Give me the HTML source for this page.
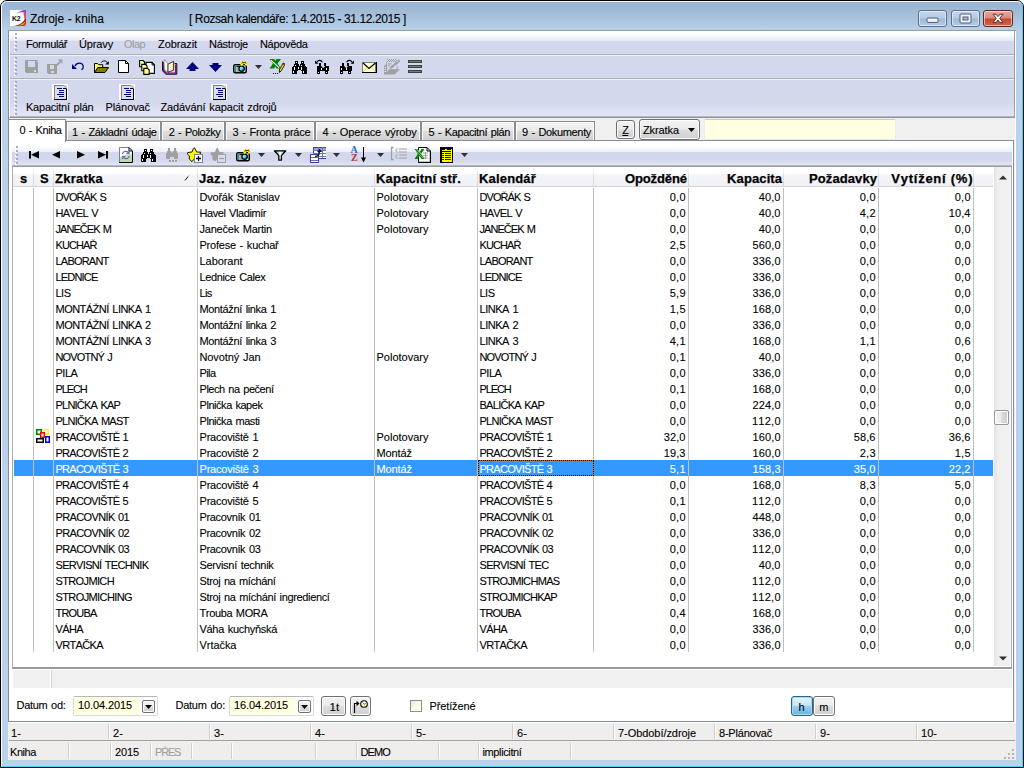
<!DOCTYPE html>
<html lang="cs"><head><meta charset="utf-8"><title>Zdroje - kniha</title>
<style>
html,body{margin:0;padding:0}
body{width:1024px;height:768px;overflow:hidden;background:#fff;position:relative;font-family:"Liberation Sans",sans-serif;font-size:11px;color:#000}
div,span,svg{position:absolute;box-sizing:border-box}
.t{white-space:pre;line-height:16px;height:16px;font-kerning:none;-webkit-text-stroke:0.1px currentColor}
.b{-webkit-text-stroke:0.25px currentColor}
.u{text-decoration:underline}
#frame{left:0;top:0;width:1024px;height:768px;border:1px solid #000;border-radius:7px 7px 0 0;background:#b9d1ea;overflow:hidden}
#cap{left:0;top:0;width:1022px;height:30px;background:linear-gradient(#98b3d1 0,#9fbad7 30%,#b9d1ea 100%)}
#hl{left:0;top:0;width:1022px;height:766px;border:1px solid;border-color:#f4f8fc #4fd0f4 #4fd0f4 #ffffff;border-radius:6px 6px 0 0}
#client{left:8px;top:30px;width:1008px;height:730px;background:#f0f0f0}
#cl1{left:8px;top:30px;width:1008px;height:1px;background:#9c9c9c}
#cl2{left:8px;top:31px;width:1px;height:691px;background:#8a8d96}
#cl3{left:1015px;top:31px;width:1px;height:691px;background:#fff}
#cl4{left:8px;top:722px;width:1008px;height:1px;background:#fff}
.cb{top:10px;height:17px;border:1px solid #5b6f8a;border-radius:3px;box-shadow:inset 0 0 0 1px rgba(255,255,255,.55)}
#dock{left:9px;top:31px;width:1006px;height:87px;background:#d4d8ed;border-left:1px solid #fff;border-right:1px solid #a0a0a0;border-bottom:1px solid #8f9098}
#dock .g0{left:0;top:0;width:1004px;height:10px;background:linear-gradient(#fff 0,#fff 28%,#e5e8f4 100%)}
#dock .gb{left:0;top:71px;width:1004px;height:15px;background:linear-gradient(#d4d8ed 0,#e1e5f4 93.3%,#b4b7c4 93.4%,#b4b7c4 100%)}
.sepd{left:0;width:1004px;height:1px;background:#b2b2b2}
.sepl{left:0;width:1004px;height:1px;background:#f0f1f8}
.grip{width:3px;background-image:linear-gradient(#a8acc2 0,#a8acc2 50%,transparent 50%),linear-gradient(#fff 0,#fff 50%,transparent 50%);background-size:2px 4px,2px 4px;background-position:1px 0,0 1px;background-repeat:repeat-y}
.tab{top:121px;height:19px;border:1px solid #898c95;border-bottom:none;background:linear-gradient(#f3f3f3 0,#ebebeb 50%,#dddddd 50%,#d0d0d0 100%);box-shadow:inset 1px 1px 0 #fcfcfc,inset -1px 0 0 #fcfcfc}
#tab0{left:8px;top:119px;width:58px;height:23px;border:1px solid #898c95;border-bottom:none;background:#fff}
#pagebox{left:8px;top:140px;width:1006px;height:582px;border:1px solid #898c95;background:#fff}
#gtb{left:12px;top:144px;width:1000px;height:22px;background:linear-gradient(#fff 0,#fff 8%,#edeff8 36.3%,#d3d7ec 36.4%,#d3d7ec 72%,#e2e5f3 95.4%,#b4b7c4 95.5%,#b4b7c4 100%)}
#grid{left:12px;top:166px;width:1000px;height:503px;border:1px solid;border-color:#9a9da6 #a4a8b2 #8e8e8e #a8abb3;border-bottom-width:2px;border-bottom-color:#9a9a9a;background:#fff}
#ghead{left:13px;top:167px;width:980px;height:20px;background:linear-gradient(#fff 0,#fff 35%,#f4f5f9 40%,#f0f1f6 100%);border-bottom:1px solid #d5d5d5}
.hs{top:167px;width:1px;height:20px;background:linear-gradient(#fff,#dfe0e4 40%,#d5d5d5)}
.vl{top:188px;width:1px;height:464px;background:#c0c0c0}
#sel{left:14px;top:460px;width:979px;height:16px;background:#3399ff}
#foc{left:478px;top:460px;width:116px;height:16px;border:1px solid #cc6600}
#foc2{left:478px;top:460px;width:116px;height:16px;border:1px dotted #000}
#sb{left:994px;top:167px;width:16px;height:499px;background:linear-gradient(90deg,#e3e3e3 0,#efefef 25%,#f0f0f0 100%)}
#thumb{left:994px;top:410px;width:15px;height:15px;border:1px solid #979797;border-radius:2px;background:linear-gradient(90deg,#f2f2f2 0,#ebebeb 48%,#d8d8d8 52%,#cfcfcf 100%);box-shadow:inset 0 0 0 1px #fff}
#band{left:13px;top:670px;width:999px;height:18px;background:#f0f0f0}
.inp{top:696px;height:20px;width:85px;border:1px solid #d5dae2;border-top-color:#b4b7bf;border-radius:2px;background:#fff}
.inp i{position:absolute;left:0;top:0;width:66px;height:18px;background:#ffffe1}
.ddb{top:699.5px;width:13px;height:13px;border:1px solid #707070;border-radius:2px;background:linear-gradient(#f2f2f2 0,#ebebeb 50%,#dddddd 50%,#cfcfcf 100%);box-shadow:inset 0 0 0 1px #fcfcfc}
.btn{top:696px;height:20px;border:1px solid #707070;border-radius:3px;background:linear-gradient(#f2f2f2 0,#ebebeb 48%,#dddddd 52%,#cfcfcf 100%);box-shadow:inset 0 0 0 1px #fcfcfc}
.btnp{top:696px;height:20px;border:1px solid #2c628b;border-radius:3px;background:linear-gradient(#e5f4fc 0,#c4e5f6 48%,#98d1ef 52%,#68b3db 100%);box-shadow:inset 0 0 0 1px #9edbf5}
#fbar{left:9px;top:723px;width:1006px;height:18px;background:#f0eded;border-bottom:1px solid #a0a0a0}
#sbar{left:9px;top:742px;width:1006px;height:18px;background:#f0eded}
.fs{top:724px;width:2px;height:15px;border-left:1px solid #d0cdcd;border-right:1px solid #fff}
.ss{top:743px;width:2px;height:16px;border-left:1px solid #d0cdcd;border-right:1px solid #fff}
</style></head>
<body>
<div id="frame"><div id="cap"></div><div id="hl"></div></div>
<span class="t " style="top:10.84px;font-size:12px;letter-spacing:0.045px;left:30.00px;">Zdroje - kniha</span>
<span class="t " style="top:10.84px;font-size:12px;letter-spacing:-0.399px;left:189.00px;">[ Rozsah kalendáře: 1.4.2015 - 31.12.2015 ]</span>
<div class="cb" style="left:918px;width:29px;background:linear-gradient(#c3d6ea 0,#b5cbe3 48%,#9db9d6 52%,#b3cde6 100%)"></div>
<div class="cb" style="left:951px;width:29px;background:linear-gradient(#c3d6ea 0,#b5cbe3 48%,#9db9d6 52%,#b3cde6 100%)"></div>
<div class="cb" style="left:983px;width:30px;border-color:#5a2a2a;background:linear-gradient(#e9a99c 0,#dc8a7b 48%,#c5442c 52%,#d3664e 100%)"></div>
<svg style="left:926px;top:17px" width="13" height="7" viewBox="0 0 13 7"><rect x="1" y="1" width="11" height="4.4" rx="1" fill="#f4f4f4" stroke="#4a5a78" stroke-width="1"/></svg>
<svg style="left:959px;top:13px" width="13" height="11" viewBox="0 0 13 11"><rect x="1" y="1" width="11" height="9" rx="1" fill="#f4f4f4" stroke="#4a5a78" stroke-width="1"/><rect x="4" y="4" width="5" height="3" fill="#a8c0dc" stroke="#4a5a78" stroke-width="1"/></svg>
<svg style="left:991px;top:12px" width="14" height="13" viewBox="0 0 14 13"><path d="M2 2.2H5L7 4.6L9 2.2H12L8.8 6.3L12 10.6H9L7 8.1L5 10.6H2L5.2 6.3z" fill="#f6f6f6" stroke="#5a3030" stroke-width="1" stroke-linejoin="round"/></svg>
<svg style="left:10px;top:10px" width="16" height="16" viewBox="0 0 16 16"><rect width="16" height="16" fill="#fff"/><path d="M6.5 3.4C9.5 0.8 13 0.1 16 0.2V3.4C13.2 1.8 10 2 6.5 3.4z" fill="#a838a8"/><path d="M10 1.2C12 0.4 14 0.2 16 0.2V1.6C14 1 12 1 10 1.2z" fill="#5a48b0"/><path d="M16 2.6V13.5C13.6 10.5 15 6.4 13.2 3.4z" fill="#e4485c"/><path d="M16 9V16H3C8.5 15.6 12.6 13.4 14.6 9.6z" fill="#b8201c"/><path d="M8 15.4C11.2 14.8 13.4 13.4 15 11.4C15 14 12.6 15.9 8 15.4z" fill="#f8c828"/><path d="M13 15.8C14.6 15 15.6 14 16 12.8V16z" fill="#f07820"/><text x="1.9" y="10.6" font-family="Liberation Sans,sans-serif" font-weight="bold" font-size="7" fill="#101010" textLength="8.8" lengthAdjust="spacingAndGlyphs">K2</text></svg>
<div id="client"></div><div id="cl1"></div><div id="cl2"></div><div id="cl3"></div><div id="cl4"></div>
<div id="dock"><div class="g0"></div><div class="gb"></div><div class="sepd" style="top:23px"></div><div class="sepl" style="top:24px"></div><div class="sepd" style="top:47px"></div><div class="sepl" style="top:48px"></div><div class="grip" style="left:4px;top:2px;height:19px"></div><div class="grip" style="left:4px;top:26px;height:19px"></div><div class="grip" style="left:4px;top:50px;height:35px"></div></div>
<span class="t " style="top:36.19px;font-size:11px;letter-spacing:-0.377px;left:26.00px;">Formulář</span>
<span class="t " style="top:36.19px;font-size:11px;letter-spacing:-0.141px;left:79.00px;">Úpravy</span>
<span class="t " style="top:36.19px;font-size:11px;letter-spacing:-0.562px;color:#a0a0a0;left:124.00px;">Olap</span>
<span class="t " style="top:36.19px;font-size:11px;letter-spacing:-0.094px;left:158.00px;">Zobrazit</span>
<span class="t " style="top:36.19px;font-size:11px;letter-spacing:-0.246px;left:209.00px;">Nástroje</span>
<span class="t " style="top:36.19px;font-size:11px;letter-spacing:-0.332px;left:260.00px;">Nápověda</span>
<span class="t " style="top:98.79px;font-size:11px;letter-spacing:-0.230px;word-spacing:1px;left:26.00px;">Kapacitní plán</span>
<span class="t " style="top:98.79px;font-size:11px;letter-spacing:-0.096px;left:105.50px;">Plánovač</span>
<span class="t " style="top:98.79px;font-size:11px;letter-spacing:-0.122px;word-spacing:1px;left:160.50px;">Zadávání kapacit zdrojů</span>
<svg style="left:24px;top:59px" width="16" height="16" viewBox="0 0 16 16" shape-rendering="crispEdges"><path fill="#a0a0a0" d="M1 1h13v13H2l-1-1z"/><rect x="4" y="2" width="7" height="6" fill="#d4d8ed"/><rect x="10" y="11" width="2" height="2" fill="#d4d8ed"/><rect x="13" y="2" width="1" height="1" fill="#d4d8ed"/></svg>
<svg style="left:47px;top:59px" width="16" height="16" viewBox="0 0 16 16" shape-rendering="crispEdges"><path fill="#a0a0a0" d="M0 5h10v10H1l-1-1z"/><rect x="3" y="6" width="4" height="4" fill="#d4d8ed"/><rect x="4" y="12" width="3" height="2" fill="#d4d8ed"/><path d="M9.5 6.5L13 3" stroke="#a0a0a0" stroke-width="1.8" shape-rendering="auto"/><path d="M10.8 0.4H15.4V5z" fill="#a0a0a0" shape-rendering="auto"/></svg>
<svg style="left:70px;top:59px" width="16" height="16" viewBox="0 0 16 16" shape-rendering="crispEdges"><g shape-rendering="auto"><path d="M5 7C6.5 3.5 12.5 3 13.2 7.2C13.5 9 12.6 10.2 11.5 10.8" stroke="#000080" stroke-width="1.25" fill="none"/><path d="M2 5V10H7z" fill="#000080"/></g></svg>
<svg style="left:93px;top:59px" width="16" height="16" viewBox="0 0 16 16" shape-rendering="crispEdges"><g shape-rendering="auto"><path d="M1.5 13.5V4.5h3l1 1.2h4.2V8.5" fill="#ffff66" stroke="#000"/><path d="M1.5 13.5L4.8 8.5H15.6L12 13.5z" fill="#808000" stroke="#000"/><path d="M8.2 3.6C9.6 1.4 13 1.2 14.4 3.8" stroke="#000" fill="none"/><path d="M15.8 2.2V5.6H12.2z" fill="#000"/></g></svg>
<svg style="left:116px;top:59px" width="16" height="16" viewBox="0 0 16 16" shape-rendering="crispEdges"><g shape-rendering="auto"><path d="M2.5 1.5H9.5L12.5 4.5V13.5H2.5z" fill="#fff" stroke="#000"/><path d="M9.5 1.5V4.5H12.5" fill="none" stroke="#000"/></g></svg>
<svg style="left:139px;top:59px" width="16" height="16" viewBox="0 0 16 16" shape-rendering="crispEdges"><g shape-rendering="auto"><path d="M7 3.4H13L15.4 5.8V14.4H7z" fill="#fff" stroke="#000" stroke-width="1.1"/><path d="M13 3.6V6H15.2" stroke="#000" stroke-width=".9" fill="none"/><path d="M0.6 1.5H4L5.6 3.1V7.8H0.6z" fill="#ffff8c" stroke="#000" stroke-width="1.1"/><path d="M2.8 5.4H6.4L8 7V11.7H2.8z" fill="#ffff8c" stroke="#000" stroke-width="1.1"/><path d="M4.8 9.4H8.6L10.2 11V15.4H4.8z" fill="#ffff8c" stroke="#000" stroke-width="1.1"/></g></svg>
<svg style="left:162px;top:59px" width="16" height="16" viewBox="0 0 16 16" shape-rendering="crispEdges"><g shape-rendering="auto"><path d="M0.6 2.4V11.8L3.8 15.2H14.8V4.6H12.6" stroke="#000" stroke-width="1" fill="none"/><path d="M1.6 3V11.3L4.2 14.1H13.7V5.4" stroke="#800080" stroke-width="1.3" fill="none"/><path d="M1.9 2.4L2.8 0.5L6 5.2V13.2L2.4 10.6z" fill="#fff" stroke="#707070" stroke-width=".7"/><path d="M6 5.2L11.6 2.4V11.2L6 13.2z" fill="#fff" stroke="#000" stroke-width=".8"/><g fill="#ffee00"><rect x="8" y="5.6" width="1.2" height="1.2"/><rect x="8" y="7.8" width="1.2" height="1.2"/><rect x="8" y="10" width="1.2" height="1.2"/><rect x="9.8" y="4.8" width="1.2" height="1.2"/><rect x="9.8" y="7" width="1.2" height="1.2"/><rect x="9.8" y="9.2" width="1.2" height="1.2"/></g></g></svg>
<svg style="left:185px;top:59px" width="16" height="16" viewBox="0 0 16 16" shape-rendering="crispEdges"><path shape-rendering="auto" d="M1 10L7.5 3L14 10H10.5V12H4.5V10z" fill="#000080"/></svg>
<svg style="left:208px;top:59px" width="16" height="16" viewBox="0 0 16 16" shape-rendering="crispEdges"><path shape-rendering="auto" d="M1 6L7.5 13L14 6H10.5V4H4.5V6z" fill="#000080"/></svg>
<svg style="left:231px;top:59px" width="16" height="16" viewBox="0 0 16 16" shape-rendering="crispEdges"><g shape-rendering="auto"><defs><linearGradient id="lg" x1="0" y1="0" x2="1" y2="1"><stop offset="0" stop-color="#fff"/><stop offset=".5" stop-color="#40e8f0"/><stop offset="1" stop-color="#0018c0"/></linearGradient></defs><rect x="2.75" y="5.75" width="12.5" height="8" rx="1.5" fill="#eceef6" stroke="#000" stroke-width="1.5"/><rect x="3.6" y="6.5" width="1.5" height="6.5" fill="#189898"/><rect x="5.1" y="7.5" width="3" height="5.5" fill="#b4acac"/><path d="M5.5 7.4H8.5" stroke="#000" stroke-width="1"/><ellipse cx="10.6" cy="9.8" rx="2.7" ry="2.6" fill="url(#lg)" stroke="#000" stroke-width="1.3"/><rect x="9.4" y="2" width="6.8" height="4.2" fill="#ffff00"/><path d="M9.6 6.2L10.6 7.2L11.6 6.2zM14 6.2L15 7.2L16 6.2z" fill="#ffff00"/><path d="M10.6 4.2L11.8 3L13 4.2L14.2 3L15.4 4.2M11.8 4.8L13 6L14.2 4.8" stroke="#000" stroke-width=".9" fill="none"/></g></svg>
<svg style="left:255px;top:65px" width="7" height="4" viewBox="0 0 7 4"><path d="M0 0h7L3.5 4z" fill="#303030"/></svg>
<svg style="left:269px;top:59px" width="16" height="16" viewBox="0 0 16 16" shape-rendering="crispEdges"><g shape-rendering="auto"><path d="M0.5 0H5.2L6.4 1.8L7.6 0H12L8.6 4.6L12 9.5H7.4L6.2 7.6L5 9.5H0.5L4 4.6z" fill="#008000"/><path d="M2 1.2L10 8.6" stroke="#fff" stroke-width="1.1"/><path d="M14.2 4L16 5.2L12 12L10.5 13.5L10.3 11z" fill="#ffff00" stroke="#000" stroke-width=".9"/><path d="M14.2 4L16 5.2L15.4 6.2L13.6 5z" fill="#c00000"/></g><rect x="4" y="14" width="1" height="1" fill="#000"/><rect x="6" y="14" width="1" height="1" fill="#000"/><rect x="8" y="14" width="1" height="1" fill="#000"/></svg>
<svg style="left:292px;top:59px" width="16" height="16" viewBox="0 0 16 16" shape-rendering="crispEdges"><g transform="translate(0 2)"><rect x="3" y="0" width="3" height="3" fill="#000"/><rect x="9" y="0" width="3" height="3" fill="#000"/><rect x="2" y="3" width="5" height="2" fill="#000"/><rect x="8" y="3" width="5" height="2" fill="#000"/><rect x="1" y="5" width="13" height="1" fill="#000"/><rect x="0" y="6" width="15" height="3" fill="#000"/><rect x="0" y="9" width="5" height="4" fill="#000"/><rect x="10" y="9" width="5" height="4" fill="#000"/><rect x="5" y="9" width="1" height="1" fill="#000"/><rect x="9" y="9" width="1" height="1" fill="#000"/><rect x="4" y="1" width="1" height="1" fill="#fff"/><rect x="10" y="1" width="1" height="1" fill="#fff"/><rect x="3" y="4" width="1" height="1" fill="#fff"/><rect x="9" y="4" width="1" height="1" fill="#fff"/><rect x="2" y="6" width="1" height="3" fill="#fff"/><rect x="9" y="6" width="1" height="3" fill="#fff"/><rect x="6" y="6" width="1" height="2" fill="#fff"/><rect x="1" y="10" width="1" height="2" fill="#fff"/><rect x="11" y="10" width="1" height="2" fill="#fff"/></g></svg>
<svg style="left:315px;top:59px" width="16" height="16" viewBox="0 0 16 16" shape-rendering="crispEdges"><rect x="4" y="4" width="2" height="3" fill="#000"/><rect x="9" y="4" width="2" height="3" fill="#000"/><rect x="2" y="7" width="12" height="5" fill="#000"/><rect x="2" y="12" width="3" height="3" fill="#000"/><rect x="10" y="12" width="3" height="3" fill="#000"/><path d="M6.2 7h4l-2 2.2z" fill="#d4d8ed" shape-rendering="auto"/><rect x="6" y="9" width="1" height="2" fill="#fff"/><rect x="11" y="9" width="1" height="2" fill="#fff"/><rect x="3" y="13" width="1" height="1" fill="#fff"/><rect x="11" y="13" width="1" height="1" fill="#fff"/><g shape-rendering="auto"><path d="M1.6 3.6C2.8 0.9 6 0.6 7.4 3.2" stroke="#000" fill="none" stroke-width="1.1"/><path d="M0 1.4V4.8H3.4z" fill="#000"/></g></svg>
<svg style="left:338px;top:59px" width="16" height="16" viewBox="0 0 16 16" shape-rendering="crispEdges"><rect x="4" y="4" width="2" height="3" fill="#000"/><rect x="9" y="4" width="2" height="3" fill="#000"/><rect x="2" y="7" width="12" height="5" fill="#000"/><rect x="2" y="12" width="3" height="3" fill="#000"/><rect x="10" y="12" width="3" height="3" fill="#000"/><path d="M6.2 7h4l-2 2.2z" fill="#d4d8ed" shape-rendering="auto"/><rect x="3" y="9" width="1" height="2" fill="#fff"/><rect x="8" y="9" width="1" height="2" fill="#fff"/><rect x="3" y="13" width="1" height="1" fill="#fff"/><rect x="11" y="13" width="1" height="1" fill="#fff"/><g shape-rendering="auto"><path d="M8.6 3.2C10 0.6 13.2 0.9 14.4 3.6" stroke="#000" fill="none" stroke-width="1.1"/><path d="M16 1.4V4.8H12.6z" fill="#000"/></g></svg>
<svg style="left:361px;top:59px" width="16" height="16" viewBox="0 0 16 16" shape-rendering="crispEdges"><g shape-rendering="auto"><rect x="1.5" y="3.5" width="13" height="10" fill="#ffffd0" stroke="#808080"/><path d="M1 13.5H15.5V3" stroke="#000" stroke-width="1.2" fill="none"/><path d="M2 4L8 9.5L14.5 4" stroke="#000" stroke-width="1.3" fill="none"/><path d="M2 13L6 8.5M14.5 13L10.5 8.5" stroke="#d8d860" stroke-width="1" fill="none"/></g></svg>
<svg style="left:384px;top:59px" width="16" height="16" viewBox="0 0 16 16" shape-rendering="crispEdges"><g shape-rendering="auto" fill="#a0a0a0"><path d="M2.6 3.2V12.5" stroke="#a0a0a0" stroke-width="1" fill="none"/><rect x="3" y="0" width="1" height="1"/><rect x="5" y="0" width="1" height="1"/><rect x="7" y="0" width="1" height="1"/><rect x="9" y="0" width="1" height="1"/><rect x="11" y="0" width="1" height="1"/><rect x="4" y="1" width="1" height="1"/><rect x="6" y="1" width="1" height="1"/><rect x="8" y="1" width="1" height="1"/><rect x="10" y="1" width="1" height="1"/><rect x="12" y="1" width="1" height="1"/><rect x="3" y="2" width="1" height="1"/><rect x="5" y="2" width="1" height="1"/><rect x="7" y="2" width="1" height="1"/><rect x="9" y="2" width="1" height="1"/><rect x="11" y="2" width="1" height="1"/><rect x="4" y="4.4" width="3.6" height="1"/><rect x="4" y="6.4" width="2" height="1"/><path d="M15 0.2L16 2.4L8 9.2L5.6 10L6.2 8z"/><rect x="10.4" y="6.6" width="1" height="1" fill="#d4d8ed"/><rect x="12.8" y="2" width="1" height="1" fill="#d4d8ed"/><path d="M0 7L2.2 5.2V14H0z"/><path d="M0 15.6V13.8L2.6 13.6L5.2 10.3H16L10.6 15.6z"/><rect x="12.6" y="7.4" width="1" height="3"/><rect x="0.6" y="8" width="1" height="1" fill="#fff"/><rect x="0.6" y="10" width="1" height="1" fill="#fff"/><rect x="0.6" y="12" width="1" height="1" fill="#fff"/></g></svg>
<svg style="left:407px;top:59px" width="16" height="16" viewBox="0 0 16 16" shape-rendering="crispEdges"><g><rect x="1" y="1" width="14" height="3" fill="#404040"/><rect x="1" y="6" width="14" height="3" fill="#404040"/><rect x="1" y="11" width="14" height="3" fill="#404040"/><rect x="2" y="2" width="12" height="1" fill="#787878"/><rect x="2" y="7" width="12" height="1" fill="#787878"/><rect x="2" y="12" width="12" height="1" fill="#787878"/></g></svg>
<svg style="left:52px;top:84px" width="16" height="16" viewBox="0 0 16 16" shape-rendering="crispEdges"><rect x="0" y="0" width="16" height="16" fill="#fff"/><rect x="2" y="1" width="13" height="15" fill="#dcdfe9"/><path d="M2.5 15.5V1.5H11.5" stroke="#808080" fill="none"/><path d="M2 15.5H14.5V4.5H11" stroke="#000" fill="none"/><path d="M11 1L15 4.5" stroke="#a0a0a0" fill="none" shape-rendering="auto"/><g fill="#000080"><rect x="5" y="4" width="5" height="1"/><rect x="7" y="6" width="5" height="1"/><rect x="7" y="8" width="5" height="1"/><rect x="5" y="10" width="7" height="1"/><rect x="7" y="12" width="5" height="1"/></g></svg>
<svg style="left:119px;top:84px" width="16" height="16" viewBox="0 0 16 16" shape-rendering="crispEdges"><rect x="0" y="0" width="16" height="16" fill="#fff"/><rect x="2" y="1" width="13" height="15" fill="#dcdfe9"/><path d="M2.5 15.5V1.5H11.5" stroke="#808080" fill="none"/><path d="M2 15.5H14.5V4.5H11" stroke="#000" fill="none"/><path d="M11 1L15 4.5" stroke="#a0a0a0" fill="none" shape-rendering="auto"/><g fill="#000080"><rect x="5" y="4" width="5" height="1"/><rect x="7" y="6" width="5" height="1"/><rect x="7" y="8" width="5" height="1"/><rect x="5" y="10" width="7" height="1"/><rect x="7" y="12" width="5" height="1"/></g></svg>
<svg style="left:211px;top:84px" width="16" height="16" viewBox="0 0 16 16" shape-rendering="crispEdges"><rect x="0" y="0" width="16" height="16" fill="#fff"/><rect x="2" y="1" width="13" height="15" fill="#dcdfe9"/><path d="M2.5 15.5V1.5H11.5" stroke="#808080" fill="none"/><path d="M2 15.5H14.5V4.5H11" stroke="#000" fill="none"/><path d="M11 1L15 4.5" stroke="#a0a0a0" fill="none" shape-rendering="auto"/><g fill="#000080"><rect x="5" y="4" width="5" height="1"/><rect x="7" y="6" width="5" height="1"/><rect x="7" y="8" width="5" height="1"/><rect x="5" y="10" width="7" height="1"/><rect x="7" y="12" width="5" height="1"/></g></svg>
<div id="pagebox"></div>
<div id="tab0"></div>
<div class="tab" style="left:66px;width:95px"></div>
<div class="tab" style="left:161px;width:64px"></div>
<div class="tab" style="left:225px;width:90px"></div>
<div class="tab" style="left:315px;width:106px"></div>
<div class="tab" style="left:421px;width:94px"></div>
<div class="tab" style="left:515px;width:80px"></div>
<span class="t " style="top:122.19px;font-size:11px;letter-spacing:-0.448px;word-spacing:1px;left:19.50px;">0 - Kniha</span>
<span class="t " style="top:124.19px;font-size:11px;letter-spacing:-0.365px;word-spacing:1px;left:72.00px;">1 - Základní údaje</span>
<span class="t " style="top:124.19px;font-size:11px;letter-spacing:-0.447px;word-spacing:1px;left:168.80px;">2 - Položky</span>
<span class="t " style="top:124.19px;font-size:11px;letter-spacing:-0.204px;word-spacing:1px;left:232.50px;">3 - Fronta práce</span>
<span class="t " style="top:124.19px;font-size:11px;letter-spacing:-0.141px;word-spacing:1px;left:322.50px;">4 - Operace výroby</span>
<span class="t " style="top:124.19px;font-size:11px;letter-spacing:-0.396px;word-spacing:1px;left:428.50px;">5 - Kapacitní plán</span>
<span class="t " style="top:124.19px;font-size:11px;letter-spacing:-0.349px;word-spacing:1px;left:522.00px;">9 - Dokumenty</span>
<div class="btn" style="left:616px;top:120px;width:19px;height:19px"></div>
<span class="t u" style="top:121.59px;font-size:11px;letter-spacing:-0.734px;left:622.30px;">Z</span>
<div class="btn" style="left:639px;top:119px;width:61px;height:21px"></div>
<span class="t " style="top:121.79px;font-size:11px;letter-spacing:-0.098px;left:643.00px;">Zkratka</span>
<svg style="left:688px;top:128px" width="7" height="4"><path d="M0 0h7L3.5 4z" fill="#000"/></svg>
<div style="left:704px;top:119px;width:192px;height:21px;background:#ffffe1;border:1px solid #e8ecf0;border-top-color:#c9ccd3;border-radius:2px"></div>
<div id="gtb"><div class="grip" style="left:3px;top:2px;height:20px"></div></div>
<svg style="left:27px;top:147px" width="16" height="16" viewBox="0 0 16 16" shape-rendering="crispEdges"><rect x="2" y="4" width="2" height="7.6" fill="#000" shape-rendering="auto"/><path d="M4 7.8L12 4V11.6z" fill="#000" shape-rendering="auto"/></svg>
<svg style="left:50px;top:147px" width="16" height="16" viewBox="0 0 16 16" shape-rendering="crispEdges"><path d="M2 7.8L10 4V11.6z" fill="#000" shape-rendering="auto"/></svg>
<svg style="left:73px;top:147px" width="16" height="16" viewBox="0 0 16 16" shape-rendering="crispEdges"><path d="M12 7.8L4 4V11.6z" fill="#000" shape-rendering="auto"/></svg>
<svg style="left:96px;top:147px" width="16" height="16" viewBox="0 0 16 16" shape-rendering="crispEdges"><rect x="10" y="4" width="2" height="7.6" fill="#000" shape-rendering="auto"/><path d="M10 7.8L2 4V11.6z" fill="#000" shape-rendering="auto"/></svg>
<svg style="left:119px;top:147px" width="16" height="16" viewBox="0 0 16 16" shape-rendering="crispEdges"><g shape-rendering="auto"><path d="M0.5 0.5H9.5L13 4V15H0.5z" fill="#fff"/><path d="M0.5 15L0.5 10L13 7V15z" fill="#b8dcb8"/><path d="M0.5 15.5V0.5H9.5" stroke="#808080" fill="none"/><path d="M0 15.5H13.5V4L10 0.5V4H13" stroke="#000" fill="none"/><path d="M3.5 7C3.8 4.5 7 3.5 9 5.2" stroke="#6c6ca4" stroke-width="1.2" fill="none"/><path d="M10.6 3.2V7.2H6.8z" fill="#6c6ca4"/><path d="M10.3 9C10 11.5 7 12.5 5 10.8" stroke="#6c6ca4" stroke-width="1.2" fill="none"/><path d="M3.2 12.8V8.8H7z" fill="#6c6ca4"/></g></svg>
<svg style="left:141px;top:147px" width="16" height="16" viewBox="0 0 16 16" shape-rendering="crispEdges"><g transform="translate(0 2)"><rect x="3" y="0" width="3" height="3" fill="#000"/><rect x="9" y="0" width="3" height="3" fill="#000"/><rect x="2" y="3" width="5" height="2" fill="#000"/><rect x="8" y="3" width="5" height="2" fill="#000"/><rect x="1" y="5" width="13" height="1" fill="#000"/><rect x="0" y="6" width="15" height="3" fill="#000"/><rect x="0" y="9" width="5" height="4" fill="#000"/><rect x="10" y="9" width="5" height="4" fill="#000"/><rect x="5" y="9" width="1" height="1" fill="#000"/><rect x="9" y="9" width="1" height="1" fill="#000"/><rect x="4" y="1" width="1" height="1" fill="#fff"/><rect x="10" y="1" width="1" height="1" fill="#fff"/><rect x="3" y="4" width="1" height="1" fill="#fff"/><rect x="9" y="4" width="1" height="1" fill="#fff"/><rect x="2" y="6" width="1" height="3" fill="#fff"/><rect x="9" y="6" width="1" height="3" fill="#fff"/><rect x="6" y="6" width="1" height="2" fill="#fff"/><rect x="1" y="10" width="1" height="2" fill="#fff"/><rect x="11" y="10" width="1" height="2" fill="#fff"/></g></svg>
<svg style="left:165px;top:147px" width="16" height="16" viewBox="0 0 16 16" shape-rendering="crispEdges"><rect x="3" y="1" width="2" height="3" fill="#a0a0a0"/><rect x="9" y="1" width="2" height="3" fill="#a0a0a0"/><rect x="2" y="4" width="10" height="2" fill="#a0a0a0"/><rect x="1" y="6" width="12" height="4" fill="#a0a0a0"/><rect x="1" y="10" width="4" height="2" fill="#a0a0a0"/><rect x="9" y="10" width="4" height="2" fill="#a0a0a0"/><path d="M5.5 4h3l-1.5 2z" fill="#d4d8ed" shape-rendering="auto"/><g fill="#a0a0a0"><rect x="4" y="13" width="2" height="2"/><rect x="7" y="13" width="2" height="2"/><rect x="10" y="13" width="2" height="2"/></g></svg>
<svg style="left:187px;top:147px" width="16" height="16" viewBox="0 0 16 16" shape-rendering="crispEdges"><g shape-rendering="auto"><path d="M7.5 0.8L9.6 5L13.8 5.2L13 7.2L10 9L7.5 11.5L5 14.6L2.2 12L2.5 9L0.3 7L0.7 5.6L5 5L6.3 1.6z" fill="#ffff00" stroke="#000" stroke-width=".9"/><rect x="7.5" y="7.5" width="8" height="8" fill="#fff" stroke="#808080"/><path d="M9 11.5h5M11.5 9v5" stroke="#000" stroke-width="1.3"/></g></svg>
<svg style="left:210px;top:147px" width="16" height="16" viewBox="0 0 16 16" shape-rendering="crispEdges"><g shape-rendering="auto"><path d="M7.5 0.8L9.6 5L13.8 5.2L13 7.2L10 9L7.5 11.5L5 14.6L2.2 12L2.5 9L0.3 7L0.7 5.6L5 5L6.3 1.6z" fill="#a0a0a0"/><rect x="7.5" y="7.5" width="8" height="8" fill="#d8dbec" stroke="#a0a0a0"/><path d="M9 11.5h5" stroke="#a0a0a0" stroke-width="1.3"/></g></svg>
<svg style="left:234px;top:147px" width="16" height="16" viewBox="0 0 16 16" shape-rendering="crispEdges"><g shape-rendering="auto"><defs><linearGradient id="lg" x1="0" y1="0" x2="1" y2="1"><stop offset="0" stop-color="#fff"/><stop offset=".5" stop-color="#40e8f0"/><stop offset="1" stop-color="#0018c0"/></linearGradient></defs><rect x="2.75" y="5.75" width="12.5" height="8" rx="1.5" fill="#eceef6" stroke="#000" stroke-width="1.5"/><rect x="3.6" y="6.5" width="1.5" height="6.5" fill="#189898"/><rect x="5.1" y="7.5" width="3" height="5.5" fill="#b4acac"/><path d="M5.5 7.4H8.5" stroke="#000" stroke-width="1"/><ellipse cx="10.6" cy="9.8" rx="2.7" ry="2.6" fill="url(#lg)" stroke="#000" stroke-width="1.3"/><rect x="9.4" y="2" width="6.8" height="4.2" fill="#ffff00"/><path d="M9.6 6.2L10.6 7.2L11.6 6.2zM14 6.2L15 7.2L16 6.2z" fill="#ffff00"/><path d="M10.6 4.2L11.8 3L13 4.2L14.2 3L15.4 4.2M11.8 4.8L13 6L14.2 4.8" stroke="#000" stroke-width=".9" fill="none"/></g></svg>
<svg style="left:257.5px;top:153px" width="7" height="4" viewBox="0 0 7 4"><path d="M0 0h7L3.5 4z" fill="#303030"/></svg>
<svg style="left:272px;top:147px" width="16" height="16" viewBox="0 0 16 16" shape-rendering="crispEdges"><g shape-rendering="auto"><defs><linearGradient id="fg" x1="0" x2="1"><stop offset="0" stop-color="#208080"/><stop offset=".5" stop-color="#fff"/><stop offset="1" stop-color="#40a0a0"/></linearGradient></defs><path d="M2.4 3.8H13.8L9.4 8.6V13.2H6.8V8.6z" fill="url(#fg)" stroke="#000" stroke-width="1.3" stroke-linejoin="round"/></g></svg>
<svg style="left:295px;top:153px" width="7" height="4" viewBox="0 0 7 4"><path d="M0 0h7L3.5 4z" fill="#303030"/></svg>
<svg style="left:310px;top:147px" width="16" height="16" viewBox="0 0 16 16" shape-rendering="crispEdges"><rect x="3" y="0" width="13" height="11" fill="#fff" stroke="#40409a"/><rect x="3.5" y="0.5" width="12" height="3" fill="#9aa4d0"/><path d="M3 3.5H16M3 6.5H16M3 9H16M8.5 0V11M12.5 0V11" stroke="#6a78b8" fill="none"/><rect x="0.5" y="7.5" width="8" height="8" fill="#fff" stroke="#40409a"/><path d="M1 10.5H8M1 13H8" stroke="#6a78b8"/><g shape-rendering="auto"><path d="M5 9.5C8 9.5 9.5 8 9.5 4.5" stroke="#101040" stroke-width="1.3" fill="none"/><path d="M7 5L9.6 1.8L12.2 5z" fill="#101040"/></g></svg>
<svg style="left:333px;top:153px" width="7" height="4" viewBox="0 0 7 4"><path d="M0 0h7L3.5 4z" fill="#303030"/></svg>
<span class="t" style="left:350.5px;top:144.5px;font-family:'Liberation Serif',serif;font-weight:bold;font-size:10px;line-height:10px;height:10px;color:#3a6ac8">A</span>
<span class="t" style="left:351px;top:152.5px;font-family:'Liberation Serif',serif;font-weight:bold;font-size:10px;line-height:10px;height:10px;color:#b83030">Z</span>
<svg style="left:358px;top:147px" width="16" height="16" viewBox="0 0 16 16" shape-rendering="crispEdges"><g shape-rendering="auto"><path d="M5.5 0V13" stroke="#000" stroke-width="1"/><path d="M3 10.5H8L5.5 15.5z" fill="#000"/></g></svg>
<svg style="left:376.5px;top:153px" width="7" height="4" viewBox="0 0 7 4"><path d="M0 0h7L3.5 4z" fill="#303030"/></svg>
<svg style="left:390px;top:146px" width="18" height="16" viewBox="0 0 18 16" shape-rendering="crispEdges"><g shape-rendering="auto" stroke="#a0a0a0" fill="none"><path d="M3.5 1.5H1.5V13.5H3.5" stroke-width="1.3"/><path d="M7.5 2.5C5.5 2.5 5.5 6.5 7.5 6.5M7.5 8.5C5.5 8.5 5.5 12.5 7.5 12.5" stroke-width="1"/><path d="M9 3H17M9 6H17M9 9H17M9 12H17" stroke-width="1"/></g></svg>
<svg style="left:413.5px;top:147px" width="17" height="16" viewBox="0 0 17 16" shape-rendering="crispEdges"><g shape-rendering="auto"><path d="M4.5 0.5H13L16.5 4V15.5H4.5z" fill="#fff" stroke="#000"/><path d="M13 0.5V4H16.5" stroke="#000" fill="none"/><path d="M5 15.5H16.5V4.5" stroke="#000" stroke-width="1.4" fill="none"/><path d="M9 6H14M9 8.5H14M9 11H14M11.5 5V12" stroke="#909090" stroke-width=".8"/><path d="M0.5 2L3.5 2L5.5 5L7.5 2H10.5L7.2 7L10.5 12H7.5L5.5 9L3.5 12H0.5L3.8 7z" fill="#108010"/><path d="M1 3L9 11M2 2L10 10M3 2L10 9" stroke="#b0e0b0" stroke-width=".5"/></g></svg>
<svg style="left:440px;top:147px" width="13" height="16" viewBox="0 0 13 16" shape-rendering="crispEdges"><rect x="0.75" y="0.75" width="11.5" height="14.5" fill="#ffff00" stroke="#000" stroke-width="1.5"/><g fill="#000"><rect x="2" y="2" width="3" height="1"/><rect x="7" y="2" width="4" height="1"/><rect x="2" y="4" width="9" height="1"/></g><g fill="#0000ff"><rect x="2" y="6" width="2" height="1"/><rect x="5" y="6" width="6" height="1"/><rect x="2" y="8" width="2" height="1"/><rect x="5" y="8" width="6" height="1"/><rect x="2" y="10" width="2" height="1"/><rect x="5" y="10" width="6" height="1"/><rect x="2" y="12" width="2" height="1"/><rect x="5" y="12" width="6" height="1"/></g></svg>
<svg style="left:461px;top:153px" width="7" height="4" viewBox="0 0 7 4"><path d="M0 0h7L3.5 4z" fill="#303030"/></svg>
<div id="grid"></div><div id="ghead"></div>
<div class="hs" style="left:33px"></div>
<div class="vl" style="left:33px"></div>
<div class="hs" style="left:53px"></div>
<div class="vl" style="left:53px"></div>
<div class="hs" style="left:197px"></div>
<div class="vl" style="left:197px"></div>
<div class="hs" style="left:374px"></div>
<div class="vl" style="left:374px"></div>
<div class="hs" style="left:477px"></div>
<div class="vl" style="left:477px"></div>
<div class="hs" style="left:593px"></div>
<div class="vl" style="left:593px"></div>
<div class="hs" style="left:688px"></div>
<div class="vl" style="left:688px"></div>
<div class="hs" style="left:783px"></div>
<div class="vl" style="left:783px"></div>
<div class="hs" style="left:878px"></div>
<div class="vl" style="left:878px"></div>
<div class="hs" style="left:973px"></div>
<div class="vl" style="left:973px"></div>
<div id="sel"></div>
<div style="left:33px;top:460px;width:1px;height:16px;background:#c0c0c0"></div>
<div style="left:53px;top:460px;width:1px;height:16px;background:#c0c0c0"></div>
<div style="left:197px;top:460px;width:1px;height:16px;background:#c0c0c0"></div>
<div style="left:374px;top:460px;width:1px;height:16px;background:#c0c0c0"></div>
<div style="left:477px;top:460px;width:1px;height:16px;background:#c0c0c0"></div>
<div style="left:593px;top:460px;width:1px;height:16px;background:#c0c0c0"></div>
<div style="left:688px;top:460px;width:1px;height:16px;background:#c0c0c0"></div>
<div style="left:783px;top:460px;width:1px;height:16px;background:#c0c0c0"></div>
<div style="left:878px;top:460px;width:1px;height:16px;background:#c0c0c0"></div>
<div style="left:973px;top:460px;width:1px;height:16px;background:#c0c0c0"></div>
<div id="foc"></div><div id="foc2"></div>
<span class="t b" style="top:170.50px;font-size:13px;letter-spacing:-0.234px;font-weight:bold;left:20.00px;">s</span>
<span class="t b" style="top:170.50px;font-size:13px;letter-spacing:-0.172px;font-weight:bold;left:40.00px;">S</span>
<span class="t b" style="top:170.50px;font-size:13px;letter-spacing:0.250px;font-weight:bold;left:55.00px;">Zkratka</span>
<span class="t b" style="top:170.50px;font-size:13px;letter-spacing:0.317px;font-weight:bold;left:199.00px;">Jaz. název</span>
<span class="t b" style="top:170.50px;font-size:13px;letter-spacing:0.189px;font-weight:bold;left:376.00px;">Kapacitní stř.</span>
<span class="t b" style="top:170.50px;font-size:13px;letter-spacing:0.170px;font-weight:bold;left:479.00px;">Kalendář</span>
<span class="t b" style="top:170.50px;font-size:13px;letter-spacing:-0.105px;font-weight:bold;right:337.11px;">Opožděné</span>
<span class="t b" style="top:170.50px;font-size:13px;letter-spacing:0.100px;font-weight:bold;right:241.90px;">Kapacita</span>
<span class="t b" style="top:170.50px;font-size:13px;letter-spacing:0.089px;font-weight:bold;right:146.91px;">Požadavky</span>
<span class="t b" style="top:170.50px;font-size:13px;letter-spacing:0.751px;font-weight:bold;right:50.75px;">Vytížení (%)</span>
<svg style="left:183px;top:174px" width="8" height="8"><path d="M1.5 7L6 1.5" stroke="#181818" stroke-width="1" fill="none"/><path d="M6 1V7H1" stroke="#fff" stroke-width="1" fill="none"/></svg>
<span class="t " style="top:188.69px;font-size:11px;letter-spacing:-0.920px;word-spacing:1px;left:55.50px;">DVOŘÁK S</span>
<span class="t " style="top:188.69px;font-size:11px;letter-spacing:-0.222px;word-spacing:1px;left:199.50px;">Dvořák Stanislav</span>
<span class="t " style="top:188.69px;font-size:11px;letter-spacing:0.002px;left:376.50px;">Polotovary</span>
<span class="t " style="top:188.69px;font-size:11px;letter-spacing:-0.920px;word-spacing:1px;left:479.50px;">DVOŘÁK S</span>
<span class="t " style="top:188.69px;font-size:11px;letter-spacing:0.234px;right:338.27px;">0,0</span>
<span class="t " style="top:188.69px;font-size:11px;letter-spacing:0.145px;right:243.36px;">40,0</span>
<span class="t " style="top:188.69px;font-size:11px;letter-spacing:0.234px;right:148.27px;">0,0</span>
<span class="t " style="top:188.69px;font-size:11px;letter-spacing:0.234px;right:53.27px;">0,0</span>
<span class="t " style="top:204.69px;font-size:11px;letter-spacing:-0.750px;word-spacing:1px;left:55.50px;">HAVEL V</span>
<span class="t " style="top:204.69px;font-size:11px;letter-spacing:-0.431px;word-spacing:1px;left:199.50px;">Havel Vladimír</span>
<span class="t " style="top:204.69px;font-size:11px;letter-spacing:0.002px;left:376.50px;">Polotovary</span>
<span class="t " style="top:204.69px;font-size:11px;letter-spacing:-0.750px;word-spacing:1px;left:479.50px;">HAVEL V</span>
<span class="t " style="top:204.69px;font-size:11px;letter-spacing:0.234px;right:338.27px;">0,0</span>
<span class="t " style="top:204.69px;font-size:11px;letter-spacing:0.145px;right:243.36px;">40,0</span>
<span class="t " style="top:204.69px;font-size:11px;letter-spacing:0.234px;right:148.27px;">4,2</span>
<span class="t " style="top:204.69px;font-size:11px;letter-spacing:0.145px;right:53.36px;">10,4</span>
<span class="t " style="top:220.69px;font-size:11px;letter-spacing:-0.941px;word-spacing:1px;left:55.50px;">JANEČEK M</span>
<span class="t " style="top:220.69px;font-size:11px;letter-spacing:-0.221px;word-spacing:1px;left:199.50px;">Janeček Martin</span>
<span class="t " style="top:220.69px;font-size:11px;letter-spacing:0.002px;left:376.50px;">Polotovary</span>
<span class="t " style="top:220.69px;font-size:11px;letter-spacing:-0.941px;word-spacing:1px;left:479.50px;">JANEČEK M</span>
<span class="t " style="top:220.69px;font-size:11px;letter-spacing:0.234px;right:338.27px;">0,0</span>
<span class="t " style="top:220.69px;font-size:11px;letter-spacing:0.145px;right:243.36px;">40,0</span>
<span class="t " style="top:220.69px;font-size:11px;letter-spacing:0.234px;right:148.27px;">0,0</span>
<span class="t " style="top:220.69px;font-size:11px;letter-spacing:0.234px;right:53.27px;">0,0</span>
<span class="t " style="top:236.69px;font-size:11px;letter-spacing:-0.909px;left:55.50px;">KUCHAŘ</span>
<span class="t " style="top:236.69px;font-size:11px;letter-spacing:-0.231px;word-spacing:1px;left:199.50px;">Profese - kuchař</span>
<span class="t " style="top:236.69px;font-size:11px;letter-spacing:-0.909px;left:479.50px;">KUCHAŘ</span>
<span class="t " style="top:236.69px;font-size:11px;letter-spacing:0.234px;right:338.27px;">2,5</span>
<span class="t " style="top:236.69px;font-size:11px;letter-spacing:0.094px;right:243.41px;">560,0</span>
<span class="t " style="top:236.69px;font-size:11px;letter-spacing:0.234px;right:148.27px;">0,0</span>
<span class="t " style="top:236.69px;font-size:11px;letter-spacing:0.234px;right:53.27px;">0,0</span>
<span class="t " style="top:252.69px;font-size:11px;letter-spacing:-0.787px;left:55.50px;">LABORANT</span>
<span class="t " style="top:252.69px;font-size:11px;letter-spacing:-0.055px;left:199.50px;">Laborant</span>
<span class="t " style="top:252.69px;font-size:11px;letter-spacing:-0.787px;left:479.50px;">LABORANT</span>
<span class="t " style="top:252.69px;font-size:11px;letter-spacing:0.234px;right:338.27px;">0,0</span>
<span class="t " style="top:252.69px;font-size:11px;letter-spacing:0.094px;right:243.41px;">336,0</span>
<span class="t " style="top:252.69px;font-size:11px;letter-spacing:0.234px;right:148.27px;">0,0</span>
<span class="t " style="top:252.69px;font-size:11px;letter-spacing:0.234px;right:53.27px;">0,0</span>
<span class="t " style="top:268.69px;font-size:11px;letter-spacing:-0.812px;left:55.50px;">LEDNICE</span>
<span class="t " style="top:268.69px;font-size:11px;letter-spacing:-0.363px;word-spacing:1px;left:199.50px;">Lednice Calex</span>
<span class="t " style="top:268.69px;font-size:11px;letter-spacing:-0.812px;left:479.50px;">LEDNICE</span>
<span class="t " style="top:268.69px;font-size:11px;letter-spacing:0.234px;right:338.27px;">0,0</span>
<span class="t " style="top:268.69px;font-size:11px;letter-spacing:0.094px;right:243.41px;">336,0</span>
<span class="t " style="top:268.69px;font-size:11px;letter-spacing:0.234px;right:148.27px;">0,0</span>
<span class="t " style="top:268.69px;font-size:11px;letter-spacing:0.234px;right:53.27px;">0,0</span>
<span class="t " style="top:284.69px;font-size:11px;letter-spacing:-0.505px;left:55.50px;">LIS</span>
<span class="t " style="top:284.69px;font-size:11px;letter-spacing:-0.688px;left:199.50px;">Lis</span>
<span class="t " style="top:284.69px;font-size:11px;letter-spacing:-0.505px;left:479.50px;">LIS</span>
<span class="t " style="top:284.69px;font-size:11px;letter-spacing:0.234px;right:338.27px;">5,9</span>
<span class="t " style="top:284.69px;font-size:11px;letter-spacing:0.094px;right:243.41px;">336,0</span>
<span class="t " style="top:284.69px;font-size:11px;letter-spacing:0.234px;right:148.27px;">0,0</span>
<span class="t " style="top:284.69px;font-size:11px;letter-spacing:0.234px;right:53.27px;">0,0</span>
<span class="t " style="top:300.69px;font-size:11px;letter-spacing:-0.522px;word-spacing:1px;left:55.50px;">MONTÁŽNÍ LINKA 1</span>
<span class="t " style="top:300.69px;font-size:11px;letter-spacing:-0.351px;word-spacing:1px;left:199.50px;">Montážní linka 1</span>
<span class="t " style="top:300.69px;font-size:11px;letter-spacing:-0.480px;word-spacing:1px;left:479.50px;">LINKA 1</span>
<span class="t " style="top:300.69px;font-size:11px;letter-spacing:0.234px;right:338.27px;">1,5</span>
<span class="t " style="top:300.69px;font-size:11px;letter-spacing:0.094px;right:243.41px;">168,0</span>
<span class="t " style="top:300.69px;font-size:11px;letter-spacing:0.234px;right:148.27px;">0,0</span>
<span class="t " style="top:300.69px;font-size:11px;letter-spacing:0.234px;right:53.27px;">0,0</span>
<span class="t " style="top:316.69px;font-size:11px;letter-spacing:-0.522px;word-spacing:1px;left:55.50px;">MONTÁŽNÍ LINKA 2</span>
<span class="t " style="top:316.69px;font-size:11px;letter-spacing:-0.351px;word-spacing:1px;left:199.50px;">Montážní linka 2</span>
<span class="t " style="top:316.69px;font-size:11px;letter-spacing:-0.480px;word-spacing:1px;left:479.50px;">LINKA 2</span>
<span class="t " style="top:316.69px;font-size:11px;letter-spacing:0.234px;right:338.27px;">0,0</span>
<span class="t " style="top:316.69px;font-size:11px;letter-spacing:0.094px;right:243.41px;">336,0</span>
<span class="t " style="top:316.69px;font-size:11px;letter-spacing:0.234px;right:148.27px;">0,0</span>
<span class="t " style="top:316.69px;font-size:11px;letter-spacing:0.234px;right:53.27px;">0,0</span>
<span class="t " style="top:332.69px;font-size:11px;letter-spacing:-0.522px;word-spacing:1px;left:55.50px;">MONTÁŽNÍ LINKA 3</span>
<span class="t " style="top:332.69px;font-size:11px;letter-spacing:-0.351px;word-spacing:1px;left:199.50px;">Montážní linka 3</span>
<span class="t " style="top:332.69px;font-size:11px;letter-spacing:-0.480px;word-spacing:1px;left:479.50px;">LINKA 3</span>
<span class="t " style="top:332.69px;font-size:11px;letter-spacing:0.234px;right:338.27px;">4,1</span>
<span class="t " style="top:332.69px;font-size:11px;letter-spacing:0.094px;right:243.41px;">168,0</span>
<span class="t " style="top:332.69px;font-size:11px;letter-spacing:0.234px;right:148.27px;">1,1</span>
<span class="t " style="top:332.69px;font-size:11px;letter-spacing:0.234px;right:53.27px;">0,6</span>
<span class="t " style="top:348.69px;font-size:11px;letter-spacing:-0.828px;word-spacing:1px;left:55.50px;">NOVOTNÝ J</span>
<span class="t " style="top:348.69px;font-size:11px;letter-spacing:-0.105px;word-spacing:1px;left:199.50px;">Novotný Jan</span>
<span class="t " style="top:348.69px;font-size:11px;letter-spacing:0.002px;left:376.50px;">Polotovary</span>
<span class="t " style="top:348.69px;font-size:11px;letter-spacing:-0.828px;word-spacing:1px;left:479.50px;">NOVOTNÝ J</span>
<span class="t " style="top:348.69px;font-size:11px;letter-spacing:0.234px;right:338.27px;">0,1</span>
<span class="t " style="top:348.69px;font-size:11px;letter-spacing:0.145px;right:243.36px;">40,0</span>
<span class="t " style="top:348.69px;font-size:11px;letter-spacing:0.234px;right:148.27px;">0,0</span>
<span class="t " style="top:348.69px;font-size:11px;letter-spacing:0.234px;right:53.27px;">0,0</span>
<span class="t " style="top:364.69px;font-size:11px;letter-spacing:-0.465px;left:55.50px;">PILA</span>
<span class="t " style="top:364.69px;font-size:11px;letter-spacing:-0.586px;left:199.50px;">Pila</span>
<span class="t " style="top:364.69px;font-size:11px;letter-spacing:-0.465px;left:479.50px;">PILA</span>
<span class="t " style="top:364.69px;font-size:11px;letter-spacing:0.234px;right:338.27px;">0,0</span>
<span class="t " style="top:364.69px;font-size:11px;letter-spacing:0.094px;right:243.41px;">336,0</span>
<span class="t " style="top:364.69px;font-size:11px;letter-spacing:0.234px;right:148.27px;">0,0</span>
<span class="t " style="top:364.69px;font-size:11px;letter-spacing:0.234px;right:53.27px;">0,0</span>
<span class="t " style="top:380.69px;font-size:11px;letter-spacing:-1.137px;left:55.50px;">PLECH</span>
<span class="t " style="top:380.69px;font-size:11px;letter-spacing:-0.459px;word-spacing:1px;left:199.50px;">Plech na pečení</span>
<span class="t " style="top:380.69px;font-size:11px;letter-spacing:-1.137px;left:479.50px;">PLECH</span>
<span class="t " style="top:380.69px;font-size:11px;letter-spacing:0.234px;right:338.27px;">0,1</span>
<span class="t " style="top:380.69px;font-size:11px;letter-spacing:0.094px;right:243.41px;">168,0</span>
<span class="t " style="top:380.69px;font-size:11px;letter-spacing:0.234px;right:148.27px;">0,0</span>
<span class="t " style="top:380.69px;font-size:11px;letter-spacing:0.234px;right:53.27px;">0,0</span>
<span class="t " style="top:396.69px;font-size:11px;letter-spacing:-0.777px;word-spacing:1px;left:55.50px;">PLNIČKA KAP</span>
<span class="t " style="top:396.69px;font-size:11px;letter-spacing:-0.452px;word-spacing:1px;left:199.50px;">Plnička kapek</span>
<span class="t " style="top:396.69px;font-size:11px;letter-spacing:-0.722px;word-spacing:1px;left:479.50px;">BALIČKA KAP</span>
<span class="t " style="top:396.69px;font-size:11px;letter-spacing:0.234px;right:338.27px;">0,0</span>
<span class="t " style="top:396.69px;font-size:11px;letter-spacing:0.094px;right:243.41px;">224,0</span>
<span class="t " style="top:396.69px;font-size:11px;letter-spacing:0.234px;right:148.27px;">0,0</span>
<span class="t " style="top:396.69px;font-size:11px;letter-spacing:0.234px;right:53.27px;">0,0</span>
<span class="t " style="top:412.69px;font-size:11px;letter-spacing:-0.715px;word-spacing:1px;left:55.50px;">PLNIČKA MAST</span>
<span class="t " style="top:412.69px;font-size:11px;letter-spacing:-0.446px;word-spacing:1px;left:199.50px;">Plnička masti</span>
<span class="t " style="top:412.69px;font-size:11px;letter-spacing:-0.715px;word-spacing:1px;left:479.50px;">PLNIČKA MAST</span>
<span class="t " style="top:412.69px;font-size:11px;letter-spacing:0.234px;right:338.27px;">0,0</span>
<span class="t " style="top:412.69px;font-size:11px;letter-spacing:0.256px;right:243.24px;">112,0</span>
<span class="t " style="top:412.69px;font-size:11px;letter-spacing:0.234px;right:148.27px;">0,0</span>
<span class="t " style="top:412.69px;font-size:11px;letter-spacing:0.234px;right:53.27px;">0,0</span>
<span class="t " style="top:428.69px;font-size:11px;letter-spacing:-0.715px;word-spacing:1px;left:55.50px;">PRACOVIŠTĚ 1</span>
<span class="t " style="top:428.69px;font-size:11px;letter-spacing:-0.211px;word-spacing:1px;left:199.50px;">Pracoviště 1</span>
<span class="t " style="top:428.69px;font-size:11px;letter-spacing:0.002px;left:376.50px;">Polotovary</span>
<span class="t " style="top:428.69px;font-size:11px;letter-spacing:-0.715px;word-spacing:1px;left:479.50px;">PRACOVIŠTĚ 1</span>
<span class="t " style="top:428.69px;font-size:11px;letter-spacing:0.145px;right:338.36px;">32,0</span>
<span class="t " style="top:428.69px;font-size:11px;letter-spacing:0.094px;right:243.41px;">160,0</span>
<span class="t " style="top:428.69px;font-size:11px;letter-spacing:0.145px;right:148.36px;">58,6</span>
<span class="t " style="top:428.69px;font-size:11px;letter-spacing:0.145px;right:53.36px;">36,6</span>
<span class="t " style="top:444.69px;font-size:11px;letter-spacing:-0.715px;word-spacing:1px;left:55.50px;">PRACOVIŠTĚ 2</span>
<span class="t " style="top:444.69px;font-size:11px;letter-spacing:-0.211px;word-spacing:1px;left:199.50px;">Pracoviště 2</span>
<span class="t " style="top:444.69px;font-size:11px;letter-spacing:-0.096px;left:376.50px;">Montáž</span>
<span class="t " style="top:444.69px;font-size:11px;letter-spacing:-0.715px;word-spacing:1px;left:479.50px;">PRACOVIŠTĚ 2</span>
<span class="t " style="top:444.69px;font-size:11px;letter-spacing:0.145px;right:338.36px;">19,3</span>
<span class="t " style="top:444.69px;font-size:11px;letter-spacing:0.094px;right:243.41px;">160,0</span>
<span class="t " style="top:444.69px;font-size:11px;letter-spacing:0.234px;right:148.27px;">2,3</span>
<span class="t " style="top:444.69px;font-size:11px;letter-spacing:0.234px;right:53.27px;">1,5</span>
<span class="t " style="top:460.69px;font-size:11px;letter-spacing:-0.715px;word-spacing:1px;color:#fff;left:55.50px;">PRACOVIŠTĚ 3</span>
<span class="t " style="top:460.69px;font-size:11px;letter-spacing:-0.211px;word-spacing:1px;color:#fff;left:199.50px;">Pracoviště 3</span>
<span class="t " style="top:460.69px;font-size:11px;letter-spacing:-0.096px;color:#fff;left:376.50px;">Montáž</span>
<span class="t " style="top:460.69px;font-size:11px;letter-spacing:-0.715px;word-spacing:1px;color:#fff;left:479.50px;">PRACOVIŠTĚ 3</span>
<span class="t " style="top:460.69px;font-size:11px;letter-spacing:0.234px;color:#fff;right:338.27px;">5,1</span>
<span class="t " style="top:460.69px;font-size:11px;letter-spacing:0.094px;color:#fff;right:243.41px;">158,3</span>
<span class="t " style="top:460.69px;font-size:11px;letter-spacing:0.145px;color:#fff;right:148.36px;">35,0</span>
<span class="t " style="top:460.69px;font-size:11px;letter-spacing:0.145px;color:#fff;right:53.36px;">22,2</span>
<span class="t " style="top:476.69px;font-size:11px;letter-spacing:-0.715px;word-spacing:1px;left:55.50px;">PRACOVIŠTĚ 4</span>
<span class="t " style="top:476.69px;font-size:11px;letter-spacing:-0.211px;word-spacing:1px;left:199.50px;">Pracoviště 4</span>
<span class="t " style="top:476.69px;font-size:11px;letter-spacing:-0.715px;word-spacing:1px;left:479.50px;">PRACOVIŠTĚ 4</span>
<span class="t " style="top:476.69px;font-size:11px;letter-spacing:0.234px;right:338.27px;">0,0</span>
<span class="t " style="top:476.69px;font-size:11px;letter-spacing:0.094px;right:243.41px;">168,0</span>
<span class="t " style="top:476.69px;font-size:11px;letter-spacing:0.234px;right:148.27px;">8,3</span>
<span class="t " style="top:476.69px;font-size:11px;letter-spacing:0.234px;right:53.27px;">5,0</span>
<span class="t " style="top:492.69px;font-size:11px;letter-spacing:-0.715px;word-spacing:1px;left:55.50px;">PRACOVIŠTĚ 5</span>
<span class="t " style="top:492.69px;font-size:11px;letter-spacing:-0.211px;word-spacing:1px;left:199.50px;">Pracoviště 5</span>
<span class="t " style="top:492.69px;font-size:11px;letter-spacing:-0.715px;word-spacing:1px;left:479.50px;">PRACOVIŠTĚ 5</span>
<span class="t " style="top:492.69px;font-size:11px;letter-spacing:0.234px;right:338.27px;">0,1</span>
<span class="t " style="top:492.69px;font-size:11px;letter-spacing:0.256px;right:243.24px;">112,0</span>
<span class="t " style="top:492.69px;font-size:11px;letter-spacing:0.234px;right:148.27px;">0,0</span>
<span class="t " style="top:492.69px;font-size:11px;letter-spacing:0.234px;right:53.27px;">0,0</span>
<span class="t " style="top:508.69px;font-size:11px;letter-spacing:-0.633px;word-spacing:1px;left:55.50px;">PRACOVNÍK 01</span>
<span class="t " style="top:508.69px;font-size:11px;letter-spacing:-0.350px;word-spacing:1px;left:199.50px;">Pracovník 01</span>
<span class="t " style="top:508.69px;font-size:11px;letter-spacing:-0.633px;word-spacing:1px;left:479.50px;">PRACOVNÍK 01</span>
<span class="t " style="top:508.69px;font-size:11px;letter-spacing:0.234px;right:338.27px;">0,0</span>
<span class="t " style="top:508.69px;font-size:11px;letter-spacing:0.094px;right:243.41px;">448,0</span>
<span class="t " style="top:508.69px;font-size:11px;letter-spacing:0.234px;right:148.27px;">0,0</span>
<span class="t " style="top:508.69px;font-size:11px;letter-spacing:0.234px;right:53.27px;">0,0</span>
<span class="t " style="top:524.69px;font-size:11px;letter-spacing:-0.633px;word-spacing:1px;left:55.50px;">PRACOVNÍK 02</span>
<span class="t " style="top:524.69px;font-size:11px;letter-spacing:-0.350px;word-spacing:1px;left:199.50px;">Pracovník 02</span>
<span class="t " style="top:524.69px;font-size:11px;letter-spacing:-0.633px;word-spacing:1px;left:479.50px;">PRACOVNÍK 02</span>
<span class="t " style="top:524.69px;font-size:11px;letter-spacing:0.234px;right:338.27px;">0,0</span>
<span class="t " style="top:524.69px;font-size:11px;letter-spacing:0.094px;right:243.41px;">336,0</span>
<span class="t " style="top:524.69px;font-size:11px;letter-spacing:0.234px;right:148.27px;">0,0</span>
<span class="t " style="top:524.69px;font-size:11px;letter-spacing:0.234px;right:53.27px;">0,0</span>
<span class="t " style="top:540.69px;font-size:11px;letter-spacing:-0.633px;word-spacing:1px;left:55.50px;">PRACOVNÍK 03</span>
<span class="t " style="top:540.69px;font-size:11px;letter-spacing:-0.350px;word-spacing:1px;left:199.50px;">Pracovník 03</span>
<span class="t " style="top:540.69px;font-size:11px;letter-spacing:-0.633px;word-spacing:1px;left:479.50px;">PRACOVNÍK 03</span>
<span class="t " style="top:540.69px;font-size:11px;letter-spacing:0.234px;right:338.27px;">0,0</span>
<span class="t " style="top:540.69px;font-size:11px;letter-spacing:0.256px;right:243.24px;">112,0</span>
<span class="t " style="top:540.69px;font-size:11px;letter-spacing:0.234px;right:148.27px;">0,0</span>
<span class="t " style="top:540.69px;font-size:11px;letter-spacing:0.234px;right:53.27px;">0,0</span>
<span class="t " style="top:556.69px;font-size:11px;letter-spacing:-0.675px;word-spacing:1px;left:55.50px;">SERVISNÍ TECHNIK</span>
<span class="t " style="top:556.69px;font-size:11px;letter-spacing:-0.291px;word-spacing:1px;left:199.50px;">Servisní technik</span>
<span class="t " style="top:556.69px;font-size:11px;letter-spacing:-0.710px;word-spacing:1px;left:479.50px;">SERVISNÍ TEC</span>
<span class="t " style="top:556.69px;font-size:11px;letter-spacing:0.234px;right:338.27px;">0,0</span>
<span class="t " style="top:556.69px;font-size:11px;letter-spacing:0.145px;right:243.36px;">40,0</span>
<span class="t " style="top:556.69px;font-size:11px;letter-spacing:0.234px;right:148.27px;">0,0</span>
<span class="t " style="top:556.69px;font-size:11px;letter-spacing:0.234px;right:53.27px;">0,0</span>
<span class="t " style="top:572.69px;font-size:11px;letter-spacing:-0.630px;left:55.50px;">STROJMICH</span>
<span class="t " style="top:572.69px;font-size:11px;letter-spacing:-0.381px;word-spacing:1px;left:199.50px;">Stroj na míchání</span>
<span class="t " style="top:572.69px;font-size:11px;letter-spacing:-0.667px;left:479.50px;">STROJMICHMAS</span>
<span class="t " style="top:572.69px;font-size:11px;letter-spacing:0.234px;right:338.27px;">0,0</span>
<span class="t " style="top:572.69px;font-size:11px;letter-spacing:0.256px;right:243.24px;">112,0</span>
<span class="t " style="top:572.69px;font-size:11px;letter-spacing:0.234px;right:148.27px;">0,0</span>
<span class="t " style="top:572.69px;font-size:11px;letter-spacing:0.234px;right:53.27px;">0,0</span>
<span class="t " style="top:588.69px;font-size:11px;letter-spacing:-0.603px;left:55.50px;">STROJMICHING</span>
<span class="t " style="top:588.69px;font-size:11px;letter-spacing:-0.356px;word-spacing:1px;left:199.50px;">Stroj na míchání ingrediencí</span>
<span class="t " style="top:588.69px;font-size:11px;letter-spacing:-0.724px;left:479.50px;">STROJMICHKAP</span>
<span class="t " style="top:588.69px;font-size:11px;letter-spacing:0.234px;right:338.27px;">0,0</span>
<span class="t " style="top:588.69px;font-size:11px;letter-spacing:0.256px;right:243.24px;">112,0</span>
<span class="t " style="top:588.69px;font-size:11px;letter-spacing:0.234px;right:148.27px;">0,0</span>
<span class="t " style="top:588.69px;font-size:11px;letter-spacing:0.234px;right:53.27px;">0,0</span>
<span class="t " style="top:604.69px;font-size:11px;letter-spacing:-0.807px;left:55.50px;">TROUBA</span>
<span class="t " style="top:604.69px;font-size:11px;letter-spacing:-0.365px;word-spacing:1px;left:199.50px;">Trouba MORA</span>
<span class="t " style="top:604.69px;font-size:11px;letter-spacing:-0.807px;left:479.50px;">TROUBA</span>
<span class="t " style="top:604.69px;font-size:11px;letter-spacing:0.234px;right:338.27px;">0,4</span>
<span class="t " style="top:604.69px;font-size:11px;letter-spacing:0.094px;right:243.41px;">168,0</span>
<span class="t " style="top:604.69px;font-size:11px;letter-spacing:0.234px;right:148.27px;">0,0</span>
<span class="t " style="top:604.69px;font-size:11px;letter-spacing:0.234px;right:53.27px;">0,0</span>
<span class="t " style="top:620.69px;font-size:11px;letter-spacing:-0.617px;left:55.50px;">VÁHA</span>
<span class="t " style="top:620.69px;font-size:11px;letter-spacing:-0.301px;word-spacing:1px;left:199.50px;">Váha kuchyňská</span>
<span class="t " style="top:620.69px;font-size:11px;letter-spacing:-0.617px;left:479.50px;">VÁHA</span>
<span class="t " style="top:620.69px;font-size:11px;letter-spacing:0.234px;right:338.27px;">0,0</span>
<span class="t " style="top:620.69px;font-size:11px;letter-spacing:0.094px;right:243.41px;">336,0</span>
<span class="t " style="top:620.69px;font-size:11px;letter-spacing:0.234px;right:148.27px;">0,0</span>
<span class="t " style="top:620.69px;font-size:11px;letter-spacing:0.234px;right:53.27px;">0,0</span>
<span class="t " style="top:636.69px;font-size:11px;letter-spacing:-0.636px;left:55.50px;">VRTAČKA</span>
<span class="t " style="top:636.69px;font-size:11px;letter-spacing:-0.056px;left:199.50px;">Vrtačka</span>
<span class="t " style="top:636.69px;font-size:11px;letter-spacing:-0.636px;left:479.50px;">VRTAČKA</span>
<span class="t " style="top:636.69px;font-size:11px;letter-spacing:0.234px;right:338.27px;">0,0</span>
<span class="t " style="top:636.69px;font-size:11px;letter-spacing:0.094px;right:243.41px;">336,0</span>
<span class="t " style="top:636.69px;font-size:11px;letter-spacing:0.234px;right:148.27px;">0,0</span>
<span class="t " style="top:636.69px;font-size:11px;letter-spacing:0.234px;right:53.27px;">0,0</span>
<svg style="left:36px;top:429px" width="15" height="15" viewBox="0 0 15 15"><rect x="0.75" y="0.75" width="4.5" height="4.5" fill="none" stroke="#008000" stroke-width="1.5"/><rect x="7.75" y="0.75" width="4.5" height="4.5" fill="none" stroke="#ffff00" stroke-width="1.5"/><rect x="4" y="3" width="5" height="6" fill="#fff"/><rect x="4.75" y="3.75" width="3.5" height="4.5" fill="none" stroke="#ff0000" stroke-width="1.5"/><rect x="0.75" y="9.75" width="6.5" height="3.5" fill="none" stroke="#000" stroke-width="1.5"/><rect x="9.75" y="7.75" width="3.5" height="5.5" fill="none" stroke="#0000ff" stroke-width="1.5"/></svg>
<div id="sb"></div><div id="thumb"></div>
<svg style="left:998.5px;top:175px" width="8" height="5"><path d="M0 4.5L4 0.5L8 4.5z" fill="#303030"/></svg>
<svg style="left:998.5px;top:656px" width="8" height="5"><path d="M0 0.5L4 4.5L8 0.5z" fill="#303030"/></svg>
<div id="band"><div style="left:37px;top:0;width:1px;height:18px;background:#fff"></div><div style="left:38px;top:0;width:1px;height:18px;background:#d4d4d4"></div></div>
<span class="t " style="top:697.19px;font-size:11px;letter-spacing:-0.306px;word-spacing:1px;left:16.50px;">Datum od:</span>
<div class="inp" style="left:73px"><i></i></div><div class="ddb" style="left:142px"></div>
<svg style="left:145px;top:704.5px" width="7" height="4"><path d="M0 0h7L3.5 4z" fill="#000"/></svg>
<span class="t " style="top:697.19px;font-size:11px;letter-spacing:-0.106px;left:78.00px;">10.04.2015</span>
<span class="t " style="top:697.19px;font-size:11px;letter-spacing:-0.250px;word-spacing:1px;left:175.50px;">Datum do:</span>
<div class="inp" style="left:229px"><i></i></div><div class="ddb" style="left:298px"></div>
<svg style="left:301px;top:704.5px" width="7" height="4"><path d="M0 0h7L3.5 4z" fill="#000"/></svg>
<span class="t " style="top:697.19px;font-size:11px;letter-spacing:-0.106px;left:234.00px;">16.04.2015</span>
<div class="btn" style="left:321px;width:25px"></div>
<span class="t " style="top:698.82px;font-size:11.5px;letter-spacing:0.203px;left:329.50px;">1t</span>
<div class="btn" style="left:350px;width:21px"></div>
<svg style="left:352px;top:699px" width="18" height="15" viewBox="0 0 18 15" fill="none"><path d="M2.5 14V4.5H5" stroke="#000" stroke-width="1.2"/><path d="M4.5 1.8L7.6 4.5L4.5 7.2z" fill="#000"/><circle cx="12" cy="5" r="3.3" fill="#fff" stroke="#000" stroke-width="1.1"/><circle cx="11" cy="5.2" r=".8" fill="#ffee00"/><circle cx="12.8" cy="6" r=".7" fill="#ffee00"/><path d="M10.6 3.4L12.4 5.2L13.8 4.4" stroke="#404040" stroke-width=".8"/></svg>
<div style="left:410px;top:700px;width:12px;height:12px;border:1px solid #8e8f8f;background:linear-gradient(135deg,#e8e8d8,#ffffe8 60%)"></div>
<span class="t " style="top:697.69px;font-size:11px;letter-spacing:-0.122px;left:429.50px;">Přetížené</span>
<div class="btnp" style="left:791px;width:22px"></div>
<span class="t " style="top:698.79px;font-size:11px;letter-spacing:-0.125px;left:798.50px;">h</span>
<div class="btn" style="left:813px;width:22px"></div>
<span class="t " style="top:698.79px;font-size:11px;letter-spacing:-0.672px;left:819.30px;">m</span>
<div id="fbar"></div><div id="sbar"></div>
<span class="t " style="top:725.19px;font-size:11px;letter-spacing:0.109px;left:11.00px;">1-</span>
<span class="t " style="top:725.19px;font-size:11px;letter-spacing:0.109px;left:113.00px;">2-</span>
<div class="fs" style="left:108px"></div>
<span class="t " style="top:725.19px;font-size:11px;letter-spacing:0.109px;left:214.00px;">3-</span>
<div class="fs" style="left:209px"></div>
<span class="t " style="top:725.19px;font-size:11px;letter-spacing:0.109px;left:315.00px;">4-</span>
<div class="fs" style="left:310px"></div>
<span class="t " style="top:725.19px;font-size:11px;letter-spacing:0.109px;left:416.00px;">5-</span>
<div class="fs" style="left:411px"></div>
<span class="t " style="top:725.19px;font-size:11px;letter-spacing:0.109px;left:517.00px;">6-</span>
<div class="fs" style="left:512px"></div>
<span class="t " style="top:725.19px;font-size:11px;letter-spacing:-0.059px;left:618.00px;">7-Období/zdroje</span>
<div class="fs" style="left:613px"></div>
<span class="t " style="top:725.19px;font-size:11px;letter-spacing:-0.205px;left:719.00px;">8-Plánovač</span>
<div class="fs" style="left:714px"></div>
<span class="t " style="top:725.19px;font-size:11px;letter-spacing:0.109px;left:820.00px;">9-</span>
<div class="fs" style="left:815px"></div>
<span class="t " style="top:725.19px;font-size:11px;letter-spacing:0.031px;left:921.00px;">10-</span>
<div class="fs" style="left:916px"></div>
<div class="ss" style="left:68px"></div>
<div class="ss" style="left:110px"></div>
<div class="ss" style="left:150px"></div>
<div class="ss" style="left:191px"></div>
<div class="ss" style="left:231px"></div>
<div class="ss" style="left:315px"></div>
<div class="ss" style="left:356px"></div>
<div class="ss" style="left:438px"></div>
<div class="ss" style="left:478px"></div>
<div class="ss" style="left:570px"></div>
<span class="t " style="top:743.79px;font-size:11px;letter-spacing:-0.428px;left:10.00px;">Kniha</span>
<span class="t " style="top:743.79px;font-size:11px;letter-spacing:-0.121px;left:115.00px;">2015</span>
<span class="t " style="top:743.79px;font-size:11px;letter-spacing:-1.200px;color:#a0a0a0;left:155.00px;">PŘES</span>
<span class="t " style="top:743.79px;font-size:11px;letter-spacing:-0.875px;left:360.50px;">DEMO</span>
<span class="t " style="top:743.79px;font-size:11px;letter-spacing:-0.380px;left:482.50px;">implicitní</span>
<svg style="left:1004px;top:749px" width="12" height="12" shape-rendering="crispEdges"><g fill="#b8b4b4"><rect x="8" y="0" width="2" height="2"/><rect x="4" y="4" width="2" height="2"/><rect x="8" y="4" width="2" height="2"/><rect x="0" y="8" width="2" height="2"/><rect x="4" y="8" width="2" height="2"/><rect x="8" y="8" width="2" height="2"/></g></svg>
</body></html>
